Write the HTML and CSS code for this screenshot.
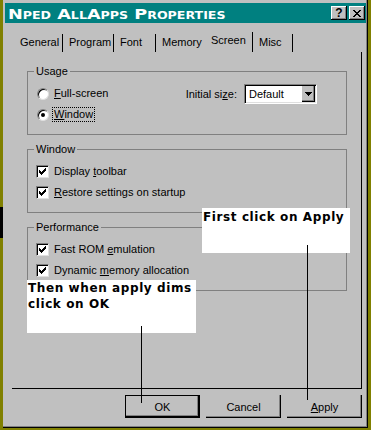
FILE: index.html
```html
<!DOCTYPE html>
<html lang="en">
<head>
    <meta charset="UTF-8">
    <meta name="viewport" content="width=device-width, initial-scale=1.0">
    <title>Nped AllApps Properties</title>
    <link rel="stylesheet" href="styles.css">
</head>
<body>
    <div class="window">
        <div class="titlebar">
            <span class="title">Nped AllApps Properties</span>
            <div class="caption-buttons">
                <button class="cap-btn" title="Help">?</button>
                <button class="cap-btn" title="Close">
                    <svg width="8" height="7" viewBox="0 0 8 7"><path d="M0 0h2v1H0zM6 0h2v1H6zM1 1h2v1H1zM5 1h2v1H5zM2 2h4v1H2zM3 3h2v1H3zM2 4h4v1H2zM1 5h2v1H1zM5 5h2v1H5zM0 6h2v1H0zM6 6h2v1H6z" fill="#000"/></svg>
                </button>
            </div>
        </div>

        <div class="tabs">
            <div class="tab tab-general">General</div>
            <div class="tab tab-program">Program</div>
            <div class="tab tab-font">Font</div>
            <div class="tab tab-memory">Memory</div>
            <div class="tab tab-screen active">Screen</div>
            <div class="tab tab-misc">Misc</div>
        </div>

        <div class="panel">
            <fieldset class="group">
                <legend>Usage</legend>
                <div class="row">
                    <span class="radio"></span>
                    <span class="label"><u>F</u>ull-screen</span>
                    <div class="size-field">
                        <span>Initial si<u>z</u>e:</span>
                        <div class="combo">
                            <span class="combo-value">Default</span>
                            <span class="combo-arrow">
                                <svg width="7" height="4" viewBox="0 0 7 4"><path d="M0 0h7v1H0zM1 1h5v1H1zM2 2h3v1H2zM3 3h1v1H3z" fill="#000"/></svg>
                            </span>
                        </div>
                    </div>
                </div>
                <div class="row">
                    <span class="radio checked"></span>
                    <span class="label focus"><u>W</u>indow</span>
                </div>
            </fieldset>

            <fieldset class="group">
                <legend>Window</legend>
                <div class="row">
                    <span class="check checked"></span>
                    <span class="label">Display <u>t</u>oolbar</span>
                </div>
                <div class="row">
                    <span class="check checked"></span>
                    <span class="label"><u>R</u>estore settings on startup</span>
                </div>
            </fieldset>

            <fieldset class="group">
                <legend>Performance</legend>
                <div class="row">
                    <span class="check checked"></span>
                    <span class="label">Fast ROM <u>e</u>mulation</span>
                </div>
                <div class="row">
                    <span class="check checked"></span>
                    <span class="label">Dynamic <u>m</u>emory allocation</span>
                </div>
            </fieldset>
        </div>

        <div class="buttons">
            <button class="btn default">OK</button>
            <button class="btn">Cancel</button>
            <button class="btn"><u>A</u>pply</button>
        </div>

        <!-- hand-drawn hints pasted over the dialog -->
        <div class="note note-apply">First click on Apply</div>
        <div class="note note-ok">Then when apply dims<br>click on OK</div>
        <div class="pointer pointer-apply"></div>
        <div class="pointer pointer-ok"></div>
    </div>
</body>
</html>
```

FILE: styles.css
```css
* {
    margin: 0;
    padding: 0;
    box-sizing: border-box;
}

body {
    width: 371px;
    height: 430px;
    overflow: hidden;
    background: linear-gradient(#808000 207px, #000 207px, #000 238px, #808000 238px) 0 0 / 3px 100% no-repeat, #808000;
    font-family: "Liberation Sans", Arial, sans-serif;
    font-size: 11px;
    color: #000;
}

.window {
    position: relative;
    width: 365px;
    height: 428px;
    margin-left: 3px;
    padding: 3px 1px 0 2px;
    background: #c0c0c0;
    border-right: 1px solid #000;
    border-bottom: 1px solid #000;
    box-shadow: inset -1px -1px #808080;
}

/* title bar */
.titlebar {
    display: flex;
    align-items: flex-start;
    height: 20px;
    padding: 0 1px 0 3px;
    background: #008080;
}

.title {
    display: inline-block;
    margin-top: 3px;
    font-family: "DejaVu Sans", sans-serif;
    font-weight: bold;
    font-size: 14px;
    line-height: 16px;
    font-variant: small-caps;
    color: #fff;
    white-space: nowrap;
    transform: scaleX(1.26);
    transform-origin: left center;
}

.caption-buttons {
    display: flex;
    gap: 2px;
    margin: 3px 0 0 auto;
}

.cap-btn {
    width: 16px;
    height: 14px;
    display: flex;
    align-items: center;
    justify-content: center;
    border: none;
    background: #c0c0c0;
    box-shadow: inset -1px -1px #000, inset 1px 1px #fff, inset -2px -2px #808080;
    font: bold 12px/1 "Liberation Sans", sans-serif;
    color: #000;
}

/* tabs */
.tabs {
    display: flex;
    align-items: flex-end;
    height: 20px;
    margin: 9px 0 0 9px;
}

.tab {
    height: 18px;
    padding: 2px 0 0 6px;
    line-height: 13px;
    border-right: 1px solid #000;
    white-space: nowrap;
}

.tab-general { width: 49px; }
.tab-program { width: 51px; }
.tab-font { width: 42px; }
.tab-memory { width: 49px; border-right-color: transparent; }
.tab-screen { width: 48px; }
.tab-misc { width: 40px; }

.tab.active {
    height: 20px;
}

/* page */
.panel {
    height: 337px;
    margin: 0 4px 0 7px;
    padding: 13px 14px 0 15px;
    border-right: 1px solid #000;
    border-bottom: 1px solid #000;
}

.group {
    border: 1px solid #808080;
    padding: 5px 8px 9px;
}

.group + .group {
    margin-top: 8px;
}

.group legend {
    margin-left: -2px;
    padding: 0 2px;
    line-height: 13px;
}

.row {
    display: flex;
    align-items: center;
    height: 21px;
}

.label {
    margin-left: 5px;
    line-height: 13px;
    white-space: nowrap;
}

.label.focus {
    margin-left: 3px;
    padding: 0 1px;
    border: 1px dotted #000;
}

.radio {
    position: relative;
    width: 12px;
    height: 12px;
    margin-left: 1px;
    border-radius: 50%;
    background: #fff;
    border: 1px solid;
    border-color: #808080 #dfdfdf #dfdfdf #808080;
    box-shadow: inset 1px 1px #000;
}

.radio.checked::after {
    content: "";
    position: absolute;
    left: 3px;
    top: 3px;
    width: 4px;
    height: 4px;
    border-radius: 50%;
    background: #000;
}

.check {
    width: 13px;
    height: 13px;
    background: #fff;
    border: 1px solid;
    border-color: #808080 #dfdfdf #dfdfdf #808080;
    box-shadow: inset 1px 1px #000;
}

.check.checked {
    background: #fff url("data:image/svg+xml;utf8,<svg xmlns='http://www.w3.org/2000/svg' width='7' height='7'><path d='M0 2h1v3H0zM1 3h1v3H1zM2 4h1v3H2zM3 3h1v3H3zM4 2h1v3H4zM5 1h1v3H5zM6 0h1v3H6z' fill='black'/></svg>") 2px 2px no-repeat;
}

.size-field {
    display: flex;
    align-items: center;
    gap: 7px;
    margin: 0 21px 0 auto;
}

.combo {
    display: flex;
    align-items: stretch;
    width: 73px;
    height: 20px;
    background: #fff;
    border: 1px solid;
    border-color: #808080 #fff #fff #808080;
    box-shadow: inset 1px 1px #000, inset -1px -1px #dfdfdf;
    padding: 1px;
}

.combo-value {
    flex: 1;
    padding-left: 3px;
    line-height: 16px;
}

.combo-arrow {
    width: 13px;
    display: flex;
    align-items: center;
    justify-content: center;
    background: #c0c0c0;
    box-shadow: inset -1px -1px #000, inset -2px -2px #808080;
}

/* dialog buttons */
.buttons {
    display: flex;
    justify-content: flex-end;
    gap: 6px;
    margin-top: 6px;
    padding-right: 4px;
}

.btn {
    width: 75px;
    height: 23px;
    border: none;
    background: #c0c0c0;
    font: 11px "Liberation Sans", Arial, sans-serif;
    color: #000;
    box-shadow: inset -1px -1px #000, inset -2px -2px #808080;
}

.btn.default {
    border: 1px solid #000;
}

/* annotations */
.note {
    position: absolute;
    background: #fff;
    font-family: "DejaVu Sans", sans-serif;
    font-weight: bold;
    font-size: 12px;
    letter-spacing: 0.6px;
    line-height: 16px;
    color: #000;
    white-space: nowrap;
}

.note-apply {
    left: 199px;
    top: 208px;
    width: 148px;
    height: 45px;
    padding: 1px 0 0 1px;
}

.note-ok {
    left: 24px;
    top: 280px;
    width: 169px;
    height: 53px;
    padding-left: 1px;
}

.pointer {
    position: absolute;
    width: 1px;
    background: #000;
}

.pointer-apply {
    left: 304px;
    top: 245px;
    height: 155px;
}

.pointer-ok {
    left: 138px;
    top: 326px;
    height: 77px;
}
```
